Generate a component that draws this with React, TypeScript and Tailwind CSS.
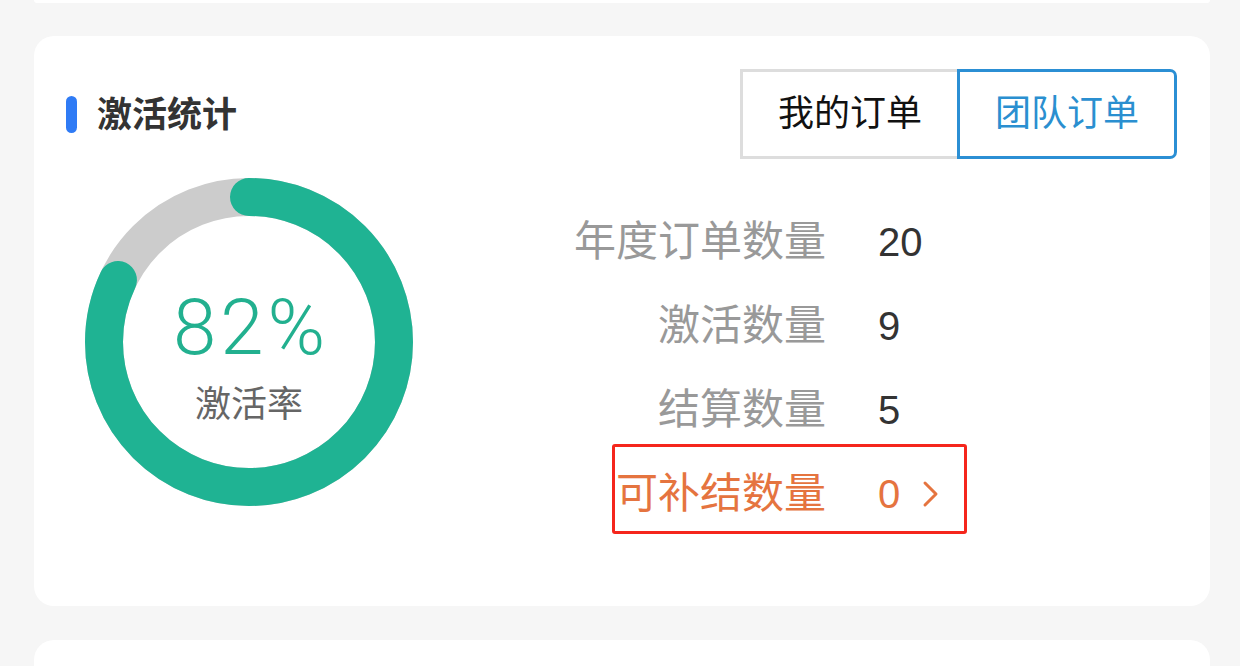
import React from "react";

const stats = [
  { label: "年度订单数量", value: "20" },
  { label: "激活数量", value: "9" },
  { label: "结算数量", value: "5" },
];

const Donut = () => {
  const r = 145;
  const c = 2 * Math.PI * r;
  return (
    <div className="relative w-[328px] h-[328px] shrink-0">
      <svg width="328" height="328" viewBox="0 0 328 328">
        <circle cx="164" cy="164" r={r} fill="none" stroke="#cccccc" strokeWidth="38" />
        <circle
          cx="164"
          cy="164"
          r={r}
          fill="none"
          stroke="#1fb393"
          strokeWidth="38"
          strokeLinecap="round"
          strokeDasharray={`${c * 0.82} ${c}`}
          transform="rotate(-90 164 164)"
        />
      </svg>
      <div className="absolute inset-0 flex flex-col items-center pt-[111px]">
        <span className="font-['Roboto',sans-serif] font-light text-[78px] leading-none tracking-[4px] pl-[4px] text-[#22b08f]">
          82%
        </span>
        <span className="mt-[20px] text-[36px] leading-none text-[#666666]">激活率</span>
      </div>
    </div>
  );
};

export default function App() {
  return (
    <div className="min-h-screen bg-[#f6f6f6] font-['Liberation_Sans','Noto_Sans_CJK_SC',sans-serif] pl-[34px] pr-[30px] overflow-hidden h-[666px]">
      <div className="h-[3px] bg-white rounded-b-[4px]" />

      <div className="mt-[33px] h-[570px] bg-white rounded-[20px] pl-[32px] pr-[33px] pt-[33px]">
        {/* header */}
        <div className="flex items-center justify-between h-[90px]">
          <div className="flex items-center">
            <span className="w-[11px] h-[37px] rounded-full bg-[#2f7bf5]" />
            <h2 className="ml-[20px] text-[35px] font-bold text-[#333333] leading-none">激活统计</h2>
          </div>
          <div className="flex h-[90px]">
            <button className="w-[217px] h-full border-[3px] border-r-0 border-[#dddddd] bg-white text-[36px] text-[#111111]">
              我的订单
            </button>
            <button className="w-[220px] h-full border-[3px] border-[#2b8fd4] rounded-r-[7px] bg-white text-[36px] text-[#2a8fd0]">
              团队订单
            </button>
          </div>
        </div>

        {/* body */}
        <div className="flex items-start mt-[19px]">
          <div className="ml-[19px]">
            <Donut />
          </div>

          <div className="ml-[157px] mt-[22px] flex flex-col">
            {stats.map((s) => (
              <div key={s.label} className="flex items-center h-[84px]">
                <span className="w-[256px] whitespace-nowrap text-right text-[42px] leading-none text-[#999999]">{s.label}</span>
                <span className="ml-[52px] text-[40px] leading-none text-[#333333]">{s.value}</span>
              </div>
            ))}
            <div className="relative flex items-center h-[84px] text-[#e5743f]">
              <span className="w-[256px] whitespace-nowrap text-right text-[42px] leading-none">可补结数量</span>
              <span className="ml-[52px] text-[40px] leading-none">0</span>
              <svg className="ml-[22px]" width="18" height="28" viewBox="0 0 18 28" fill="none">
                <polyline points="3,3 14,14 3,25" stroke="#e5743f" strokeWidth="3" strokeLinecap="round" strokeLinejoin="round" />
              </svg>
              <div className="absolute left-[42px] -top-[8px] w-[355px] h-[90px] border-[3px] border-[#f5261c] rounded-[3px]" />
            </div>
          </div>
        </div>
      </div>

      <div className="mt-[34px] h-[60px] bg-white rounded-t-[20px]" />
    </div>
  );
}
